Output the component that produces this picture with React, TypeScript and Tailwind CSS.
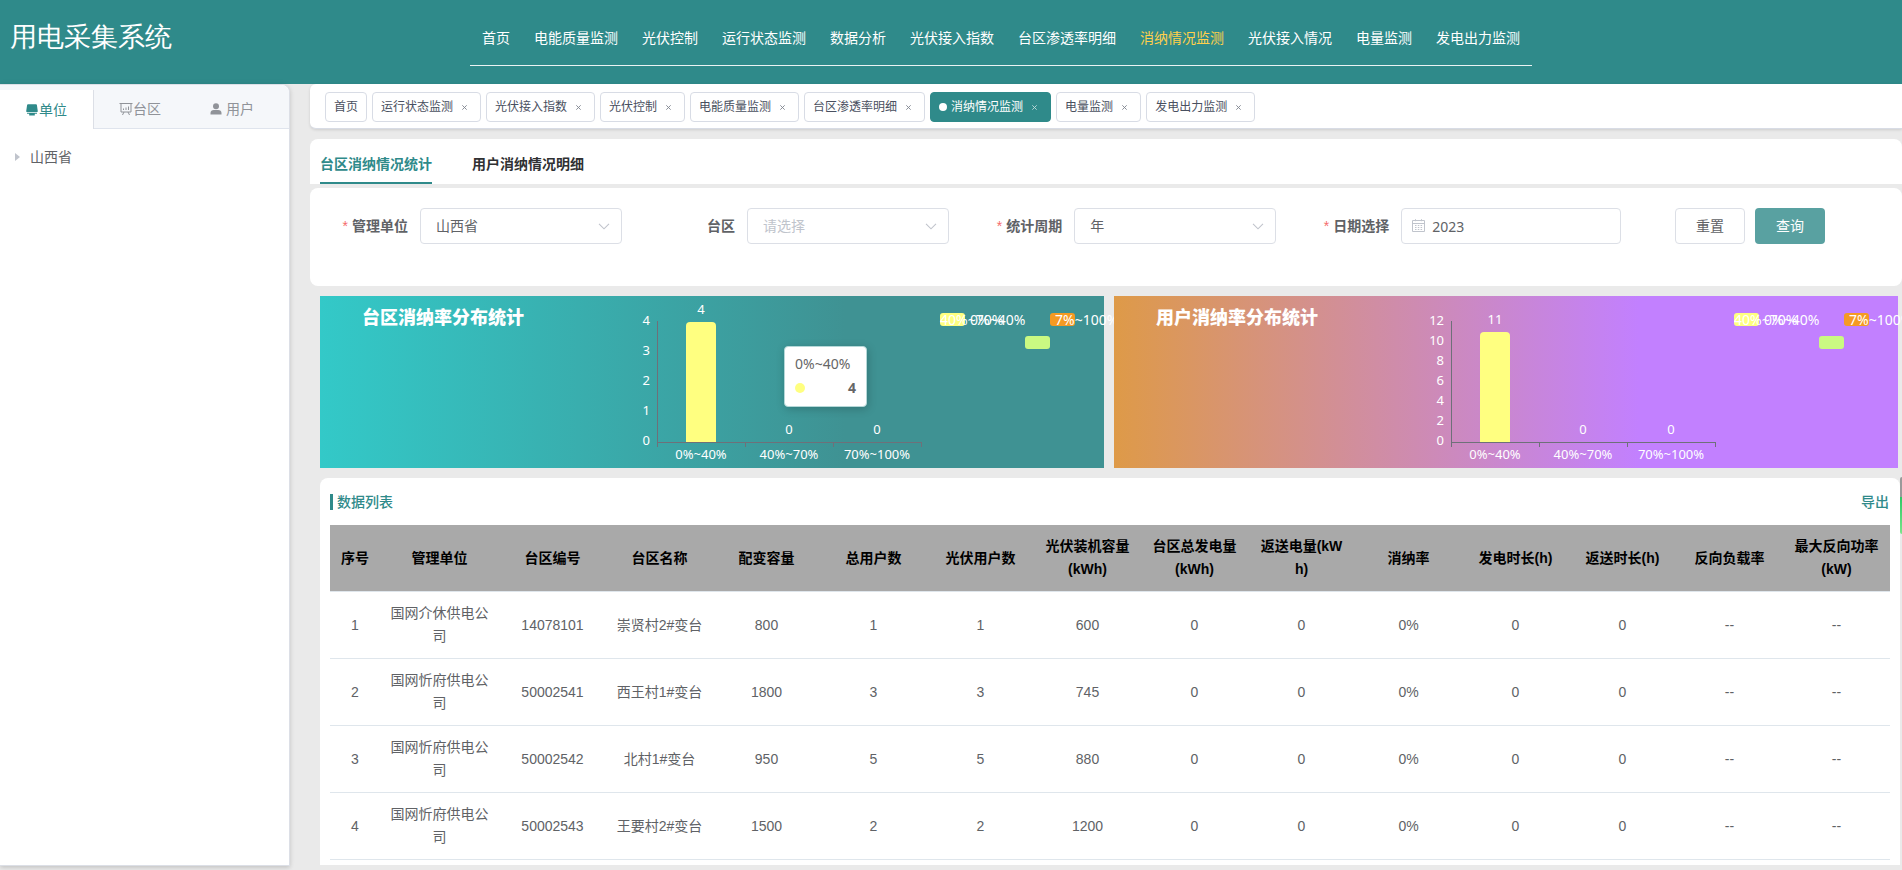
import React, { useState } from "react";

const navItems = [
  "首页",
  "电能质量监测",
  "光伏控制",
  "运行状态监测",
  "数据分析",
  "光伏接入指数",
  "台区渗透率明细",
  "消纳情况监测",
  "光伏接入情况",
  "电量监测",
  "发电出力监测",
];

const openPages = [
  "首页",
  "运行状态监测",
  "光伏接入指数",
  "光伏控制",
  "电能质量监测",
  "台区渗透率明细",
  "消纳情况监测",
  "电量监测",
  "发电出力监测",
];

const currentPage = "消纳情况监测";

const columns = [
  "序号",
  "管理单位",
  "台区编号",
  "台区名称",
  "配变容量",
  "总用户数",
  "光伏用户数",
  "光伏装机容量(kWh)",
  "台区总发电量(kWh)",
  "返送电量(kWh)",
  "消纳率",
  "发电时长(h)",
  "返送时长(h)",
  "反向负载率",
  "最大反向功率(kW)",
];

const rows = [
  ["1", "国网介休供电公司", "14078101", "崇贤村2#变台", "800", "1", "1", "600", "0", "0", "0%", "0", "0", "--", "--"],
  ["2", "国网忻府供电公司", "50002541", "西王村1#变台", "1800", "3", "3", "745", "0", "0", "0%", "0", "0", "--", "--"],
  ["3", "国网忻府供电公司", "50002542", "北村1#变台", "950", "5", "5", "880", "0", "0", "0%", "0", "0", "--", "--"],
  ["4", "国网忻府供电公司", "50002543", "王要村2#变台", "1500", "2", "2", "1200", "0", "0", "0%", "0", "0", "--", "--"],
];

function Header() {
  return (
    <header className="flex h-[84px] bg-[#2f8a8a] text-white">
      <h1 className="w-[470px] shrink-0 pl-[10px] pt-[18px] font-serif text-[27px] leading-10 font-medium">
        用电采集系统
      </h1>
      <nav className="flex h-[66px] border-b border-white/90 pt-[18px]">
        {navItems.map((item) => (
          <a
            key={item}
            href="#"
            className={
              item === currentPage
                ? "px-3 text-sm leading-10 whitespace-nowrap text-[#ffd04b]"
                : "px-3 text-sm leading-10 whitespace-nowrap"
            }
          >
            {item}
          </a>
        ))}
      </nav>
    </header>
  );
}

function UnitIcon() {
  return (
    <svg viewBox="0 0 12 12" className="size-3" fill="currentColor" aria-hidden="true">
      <path d="M2 .3h8c.5 0 .8.3.9.7l.9 6.200c.1.500-.2.800-.7.800H.9c-.500 0-.800-.300-.700-.800L1.100 1c.1-.4.4-.7.9-.7z" />
      <path d="M1 8.800h10v1H8.800v1.700H3.200V9.800H1z" />
    </svg>
  );
}

function BoardIcon() {
  return (
    <svg viewBox="0 0 14 14" className="size-[14px]" fill="none" stroke="currentColor" strokeWidth="1" aria-hidden="true">
      <path d="M.5 1.500h13M2 1.500v8.500h10V1.500M5 10l-1.500 3M9 10l1.500 3M4.500 8V6.500M7 8V5.500M9.500 8V4.500" />
    </svg>
  );
}

function UserIcon() {
  return (
    <svg viewBox="0 0 12 12" className="size-3" fill="currentColor" aria-hidden="true">
      <circle cx="6" cy="3.200" r="3" />
      <path d="M.5 11.600V10c0-1.900 1.400-3 3.300-3h4.400c1.900 0 3.300 1.100 3.300 3v1.600z" />
    </svg>
  );
}

function Sidebar() {
  return (
    <aside className="mb-1 w-[290px] shrink-0 rounded-tr-lg border border-l-0 border-[#dcdfe6] bg-white shadow-[0_2px_4px_rgba(0,0,0,0.12),0_0_6px_rgba(0,0,0,0.06)]">
      <div
        role="tablist"
        className="flex h-11 items-end rounded-tr-lg border-b border-[#dfe4ed] bg-[#f5f7fa] text-sm text-[#909399]"
      >
        <button
          role="tab"
          aria-selected="true"
          className="-mb-px flex h-[39px] w-[94px] items-center justify-center gap-px border-r border-[#dcdfe6] bg-white text-[#2f8a8a]"
        >
          <UnitIcon />
          单位
        </button>
        <button role="tab" aria-selected="false" className="flex h-[38px] w-[92px] items-center justify-center">
          <BoardIcon />
          台区
        </button>
        <button role="tab" aria-selected="false" className="flex h-[38px] w-[92px] items-center justify-center gap-1">
          <UserIcon />
          用户
        </button>
      </div>
      <ul className="pt-[15px] text-sm text-[#606266]">
        <li className="flex h-[26px] items-center gap-[10px] pl-[15px]">
          <svg viewBox="0 0 5 8" className="h-2 w-[5px]" fill="#c0c4cc" aria-hidden="true">
            <path d="M0 0l5 4-5 4z" />
          </svg>
          山西省
        </li>
      </ul>
    </aside>
  );
}

function OpenPages() {
  return (
    <div className="flex h-[45px] items-start gap-[5px] rounded-l-md border-b border-[#d8dce5] bg-white pt-2 pl-[15px] shadow-[0_1px_3px_rgba(0,0,0,0.12)]">
      {openPages.map((page) => (
        <a
          key={page}
          href="#"
          className={
            page === currentPage
              ? "flex h-[30px] items-center rounded border border-[#2f8a8a] bg-[#2f8a8a] px-2 text-xs whitespace-nowrap text-white"
              : "flex h-[30px] items-center rounded border border-[#d8dce5] bg-white px-2 text-xs whitespace-nowrap text-[#495060]"
          }
        >
          {page === currentPage && <span className="mr-1 size-2 rounded-full bg-white" />}
          {page}
          {page !== "首页" && (
            <span className="ml-[3px] flex size-4 items-center justify-center pt-px opacity-70">
              <svg viewBox="0 0 5 5" className="size-[5px]" stroke="currentColor" strokeWidth="0.900" aria-hidden="true">
                <path d="M.3.3l4.400 4.400M4.700.3L.3 4.700" />
              </svg>
            </span>
          )}
        </a>
      ))}
    </div>
  );
}

type FieldProps = { id: string; label: string; required?: boolean; children: React.ReactNode };

function Field({ id, label, required, children }: FieldProps) {
  return (
    <div className="flex h-9 items-center">
      <label htmlFor={id} className="w-[100px] shrink-0 pr-3 text-right text-sm font-bold text-[#606266]">
        {required && <span className="mr-1 font-normal text-[#f56c6c]">*</span>}
        {label}
      </label>
      {children}
    </div>
  );
}

type SelectBoxProps = { id: string; value: string; empty?: boolean };

function SelectBox({ id, value, empty }: SelectBoxProps) {
  return (
    <div className="relative w-[202px]">
      <select
        id={id}
        className={
          empty
            ? "h-9 w-full appearance-none rounded border border-[#dcdfe6] bg-white pl-[15px] text-sm text-[#c0c4cc]"
            : "h-9 w-full appearance-none rounded border border-[#dcdfe6] bg-white pl-[15px] text-sm text-[#606266]"
        }
      >
        <option>{value}</option>
      </select>
      <svg
        viewBox="0 0 12 7"
        className="pointer-events-none absolute top-[15px] right-3 h-[7px] w-3"
        fill="none"
        stroke="#c0c4cc"
        strokeWidth="1.100"
        aria-hidden="true"
      >
        <path d="M1 .8l5 5 5-5" />
      </svg>
    </div>
  );
}

function FilterForm() {
  const [year, setYear] = useState("2023");
  return (
    <form
      className="mt-1 grid h-[98px] grid-cols-[repeat(4,5fr)_4fr] rounded-lg bg-white pt-5 pr-3 pl-[10px]"
      onSubmit={(e) => e.preventDefault()}
    >
      <Field id="org" label="管理单位" required>
        <SelectBox id="org" value="山西省" />
      </Field>
      <Field id="area" label="台区">
        <SelectBox id="area" value="请选择" empty />
      </Field>
      <Field id="period" label="统计周期" required>
        <SelectBox id="period" value="年" />
      </Field>
      <Field id="date" label="日期选择" required>
        <div className="relative w-[220px]">
          <svg
            viewBox="0 0 13 13"
            className="absolute top-[11px] left-[11px] size-[13px]"
            fill="none"
            stroke="#c0c4cc"
            strokeWidth="1"
            aria-hidden="true"
          >
            <path d="M.5 1.500h12v11H.5zM.5 4.500h12M3.500.2v2M9.500.2v2" />
            <path d="M3 6.500h7.500M3 8.500h7.500M3 10.500h7.500" strokeDasharray="1.500 1.300" />
          </svg>
          <input
            id="date"
            type="text"
            value={year}
            onChange={(e) => setYear(e.target.value)}
            className="h-9 w-full rounded border border-[#dcdfe6] bg-white pl-[30px] font-['Noto_Sans','Noto_Sans_CJK_SC',sans-serif] text-sm text-[#606266]"
          />
        </div>
      </Field>
      <div className="flex h-9 justify-end gap-[10px] pr-[65px]">
        <button type="reset" className="h-9 w-[70px] shrink-0 rounded border border-[#dcdfe6] bg-white text-sm text-[#606266]">
          重置
        </button>
        <button type="submit" className="h-9 w-[70px] shrink-0 rounded bg-[#59a1a1] text-sm text-white">
          查询
        </button>
      </div>
    </form>
  );
}

type ChartProps = { values: number[]; max: number; step: number; axisColor: string };

const categories = ["0%~40%", "40%~70%", "70%~100%"];

function BarChart({ values, max, step, axisColor }: ChartProps) {
  const left = 28;
  const top = 25;
  const bottom = 146;
  const band = 88;
  const ticks: number[] = [];
  for (let v = 0; v <= max; v += step) ticks.push(v);
  return (
    <svg
      width="300"
      height="172"
      viewBox="0 0 300 172"
      className="shrink-0 font-['Noto_Sans','Noto_Sans_CJK_SC',sans-serif] text-[13px]"
      fill="#fff"
    >
      {ticks.map((v) => (
        <text key={v} x={left - 8} y={bottom + 3 - (v / max) * 120} textAnchor="end">
          {v}
        </text>
      ))}
      {values.map((v, i) => {
        const center = left + band * i + band / 2 - 1;
        const height = (v / max) * 120;
        return (
          <g key={categories[i]}>
            {v > 0 && (
              <path
                d={`M${center - 15} ${bottom}v${-(height - 4)}q0-4 4-4h22q4 0 4 4v${height - 4}z`}
                fill="#ffff80"
              />
            )}
            <text x={center} y={bottom - height - 8} textAnchor="middle">
              {v}
            </text>
            <text x={center} y={163} textAnchor="middle">
              {categories[i]}
            </text>
          </g>
        );
      })}
      <path
        d={`M${left - 0.5} ${top}V151M${left - 0.5} ${bottom + 0.5}H${left + band * 3 - 0.5}M${left + band - 0.5} ${bottom}v5M${left + band * 2 - 0.5} ${bottom}v5M${left + band * 3 - 0.5} ${bottom}v5`}
        stroke={axisColor}
        fill="none"
      />
    </svg>
  );
}

function Legend() {
  return (
    <svg
      width="174"
      height="172"
      viewBox="0 0 174 172"
      className="shrink-0 overflow-visible font-['Noto_Sans','Noto_Sans_CJK_SC',sans-serif] text-[14px]"
      fill="#fff"
    >
      <rect x="10" y="17" width="25" height="13" rx="3" fill="#ffff80" />
      <rect x="120" y="17" width="25" height="13" rx="3" fill="#f59a23" />
      <rect x="95" y="40" width="25" height="13" rx="3" fill="#caf982" />
      <text x="40" y="29">0%~40%</text>
      <text x="10" y="29">40%~70%</text>
      <text x="125" y="29">7%~100%</text>
    </svg>
  );
}

function ChartPanels() {
  return (
    <div className="mt-[10px] ml-[10px] mr-1 flex gap-[10px]">
      <section className="relative flex h-[172px] flex-1 bg-[linear-gradient(90deg,#33c9c8_0%,#3f9293_67%)]">
        <h2 className="flex-1 pt-[10px] pl-[42px] text-lg leading-6 font-black whitespace-nowrap text-white">
          台区消纳率分布统计
        </h2>
        <BarChart values={[4, 0, 0]} max={4} step={1} axisColor="#6e7079" />
        <Legend />
        <div className="absolute top-[50px] right-[237px] h-[61px] w-[83px] rounded border border-[#b5d8d8] bg-white px-[10px] pt-[5px] font-['Noto_Sans','Noto_Sans_CJK_SC',sans-serif] text-sm text-[#666] shadow-[1px_2px_10px_rgba(0,0,0,0.2)]">
          <div className="leading-6">0%~40%</div>
          <div className="flex items-center justify-between leading-6">
            <span className="size-[10px] rounded-full bg-[#ffff80]" />
            <span className="font-bold">4</span>
          </div>
        </div>
      </section>
      <section className="relative flex h-[172px] flex-1 bg-[linear-gradient(90deg,#de9a48_0%,#c280ff_67%)]">
        <h2 className="flex-1 pt-[10px] pl-[42px] text-lg leading-6 font-black whitespace-nowrap text-white">
          用户消纳率分布统计
        </h2>
        <BarChart values={[11, 0, 0]} max={12} step={2} axisColor="#6e7079" />
        <Legend />
      </section>
    </div>
  );
}

function DataList() {
  return (
    <section className="mt-[10px] mr-[2px] ml-[10px] rounded-t-lg bg-white px-[10px] pt-[10px] pb-[5px]">
      <div className="mb-[9px] flex h-7 items-center justify-between text-sm text-[#2f8a8a]">
        <h3 className="flex items-center gap-1 font-medium">
          <span className="h-4 w-[3px] bg-[#2f8a8a]" />
          数据列表
        </h3>
        <button className="pr-px font-medium">导出</button>
      </div>
      <table className="w-full table-fixed border-separate border-spacing-0 text-center text-sm leading-[23px] text-[#606266]">
        <thead>
          <tr className="bg-[#a9a9a9] text-black">
            {columns.map((column, i) => (
              <th
                key={column}
                className={
                  i === 0
                    ? "h-[67px] w-[50px] border-b border-[#dfe6ec] px-0 font-bold"
                    : i === 1
                      ? "h-[67px] w-[119px] border-b border-[#dfe6ec] px-[10px] font-bold break-all"
                      : "h-[67px] border-b border-[#dfe6ec] px-[10px] font-bold break-all"
                }
              >
                {column}
              </th>
            ))}
          </tr>
        </thead>
        <tbody>
          {rows.map((row) => (
            <tr key={row[0]}>
              {row.map((cell, i) => (
                <td key={columns[i]} className="h-[67px] border-b border-[#dfe6ec] px-[10px] break-all">
                  {cell}
                </td>
              ))}
            </tr>
          ))}
        </tbody>
      </table>
    </section>
  );
}

export default function App() {
  return (
    <div className="flex min-h-screen flex-col overflow-hidden bg-[#eaeaea] font-['Liberation_Sans','Noto_Sans_CJK_SC',sans-serif]">
      <Header />
      <div className="flex flex-1">
        <Sidebar />
        <main className="min-w-0 flex-1 pb-1 pl-5">
          <OpenPages />
          <div role="tablist" className="mt-[10px] flex h-[45px] gap-10 rounded-t-lg bg-white pl-[10px] text-sm font-bold">
            <button role="tab" aria-selected="true" className="border-b-2 border-[#2f8a8a] pt-[6px] text-[#2f8a8a]">
              台区消纳情况统计
            </button>
            <button role="tab" aria-selected="false" className="border-b-2 border-transparent pt-[6px] text-[#303133]">
              用户消纳情况明细
            </button>
          </div>
          <FilterForm />
          <ChartPanels />
          <DataList />
        </main>
      </div>
      <div className="fixed top-[477px] right-0 h-[57px] w-[2px] rounded-l-sm bg-[linear-gradient(#9a9a9a_35%,#2ec866_35%,#7be58b)]" />
    </div>
  );
}
